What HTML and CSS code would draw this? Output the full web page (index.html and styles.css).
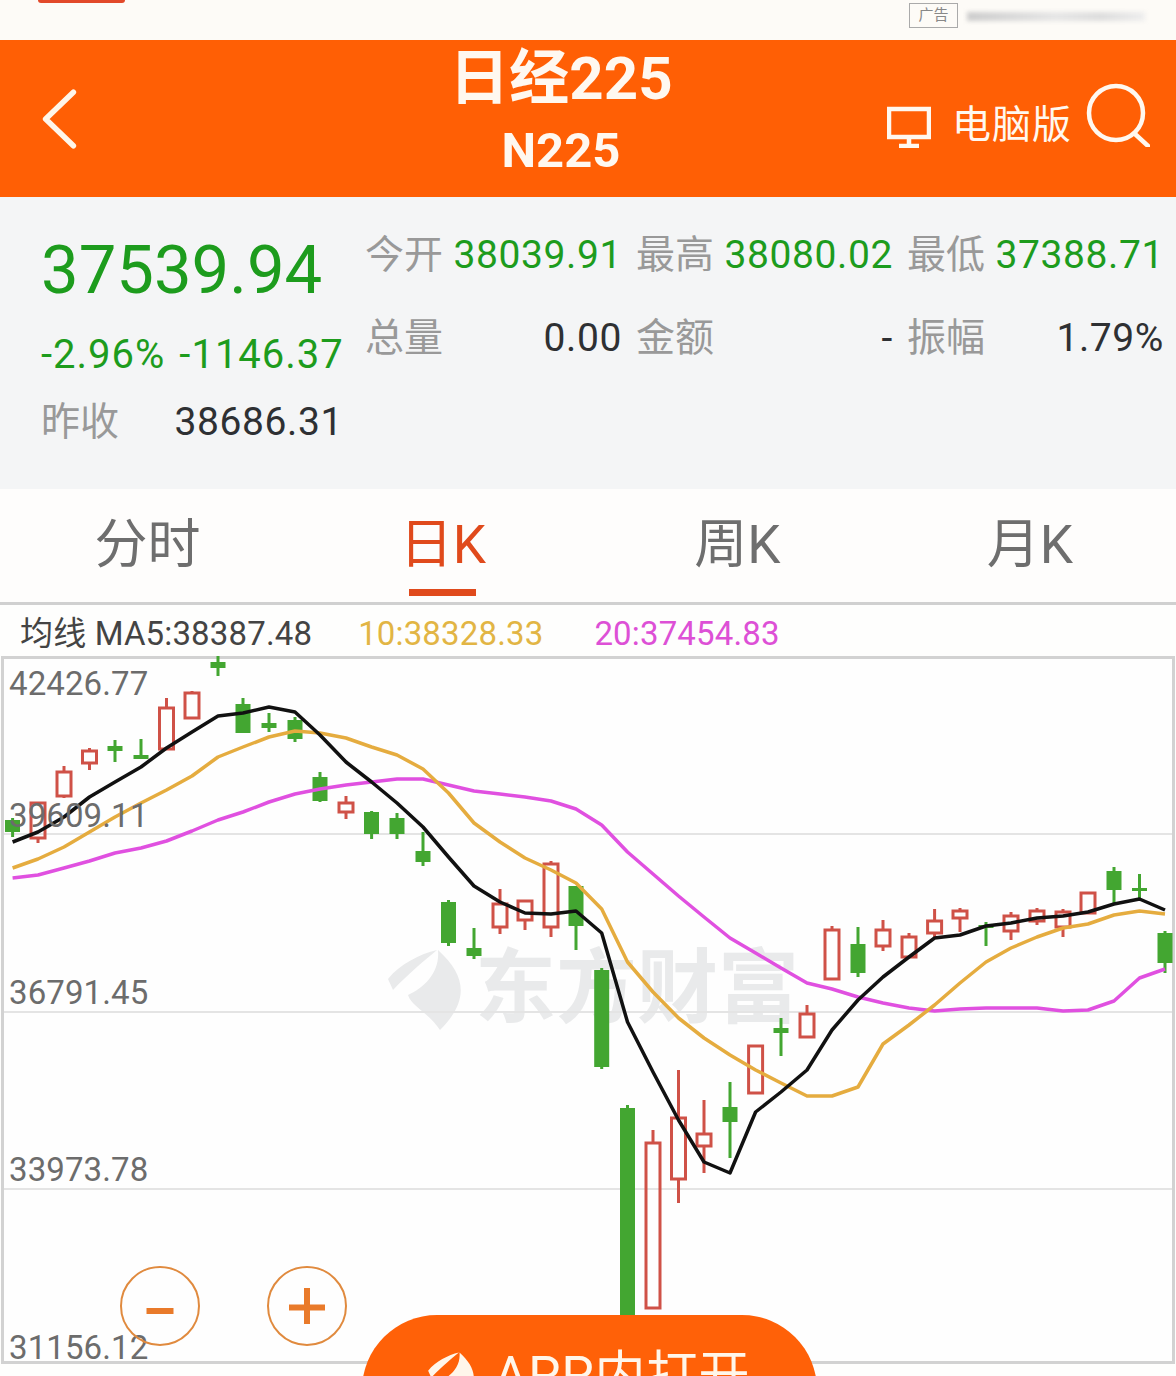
FILE: index.html
```html
<!DOCTYPE html>
<html lang="zh-CN">
<head>
  <meta charset="UTF-8" />
  <title>日经225 N225</title>
  <link rel="stylesheet" href="styles.css">
</head>
<body>
  <div class="ad-bar">
    <span class="ad-pill"></span>
    <span class="ad-tag">广告</span>
    <span class="ad-blur"></span>
  </div>

  <header class="top">
    <div class="top-left">
      <svg class="back" viewBox="0 0 40 64"><path d="M35 3 L5 32 L35 61"/></svg>
    </div>
    <div class="top-title">
      <div class="name">日经225</div>
      <div class="code">N225</div>
    </div>
    <div class="top-right">
      <svg class="monitor" viewBox="0 0 44 42"><path d="M2 3H42V31H2Z"/><path d="M22 31V40M12 40H32"/></svg>
      <span class="pc">电脑版</span>
      <svg class="search" viewBox="0 0 64 64"><circle cx="30" cy="30" r="27"/><path d="M49 51L62 63"/></svg>
    </div>
  </header>

  <section class="quote">
    <div class="quote-main">
      <div class="price">37539.94</div>
      <div class="change"><span>-2.96%</span><span>-1146.37</span></div>
      <div class="prev"><span class="label">昨收</span><span class="dark">38686.31</span></div>
    </div>
    <div class="quote-grid">
      <div class="cell"><span class="label">今开</span><span class="green">38039.91</span></div>
      <div class="cell"><span class="label">最高</span><span class="green">38080.02</span></div>
      <div class="cell"><span class="label">最低</span><span class="green">37388.71</span></div>
      <div class="cell"><span class="label">总量</span><span class="dark">0.00</span></div>
      <div class="cell"><span class="label">金额</span><span class="dark">-</span></div>
      <div class="cell"><span class="label">振幅</span><span class="dark">1.79%</span></div>
    </div>
  </section>

  <nav class="tabs">
    <div class="tab">分时</div>
    <div class="tab active">日K</div>
    <div class="tab">周K</div>
    <div class="tab">月K</div>
  </nav>

  <div class="ma-row">
    <span class="ma5">均线 MA5:38387.48</span>
    <span class="ma10">10:38328.33</span>
    <span class="ma20">20:37454.83</span>
  </div>

  <div class="chart">
    <div class="watermark">
      <svg class="wm-logo" viewBox="388 944 76 86">
        <path d="M388 977C400 962 420 952 437 948C425 958 408 972 393 988Z"/>
        <path d="M438 948C468 975 468 1000 440 1028C428 1010 412 1005 408 993C425 985 440 970 438 948Z"/>
      </svg>
      <span>东方财富</span>
    </div>

    <svg class="plot" viewBox="0 656 1176 719">
      <g class="grid">
        <path d="M4 834H1172M4 1012H1172M4 1189H1172"/>
      </g>
      <g class="candle down">
        <path d="M12.6 818V837"/><rect x="5" y="820" width="15" height="12"/>
        <path d="M115 740V762"/><rect x="107.500" y="746" width="15" height="5"/>
        <path d="M141 739V759"/><rect x="133.500" y="755" width="15" height="4"/>
        <path d="M218 656V676"/><rect x="210.500" y="662" width="15" height="6"/>
        <path d="M243 698V733"/><rect x="235.500" y="704" width="15" height="29"/>
        <path d="M269 713V732"/><rect x="261.500" y="723" width="15" height="5"/>
        <path d="M295 717V742"/><rect x="287.500" y="720" width="15" height="19"/>
        <path d="M320 772V802"/><rect x="312.500" y="777" width="15" height="24"/>
        <path d="M371.600 811V839"/><rect x="364" y="812" width="15" height="22"/>
        <path d="M397 813V839"/><rect x="389.500" y="818" width="15" height="16"/>
        <path d="M423 832V866"/><rect x="415.500" y="851" width="15" height="11"/>
        <path d="M448.500 900V946"/><rect x="441" y="902" width="15" height="41"/>
        <path d="M474 928V959"/><rect x="466.500" y="948" width="15" height="8"/>
        <path d="M576 886V950"/><rect x="568.500" y="886" width="15" height="40"/>
        <path d="M601.700 968V1069"/><rect x="594.200" y="970" width="15" height="97"/>
        <path d="M627.500 1105V1320"/><rect x="620" y="1108" width="15" height="212"/>
        <path d="M730 1082V1158"/><rect x="722.500" y="1107" width="15" height="15"/>
        <path d="M781 1018V1056"/><rect x="773.500" y="1028" width="15" height="5"/>
        <path d="M858 927V977"/><rect x="850.500" y="944" width="15" height="29"/>
        <path d="M986 922V946"/><rect x="978.500" y="925" width="15" height="3"/>
        <path d="M1114 867V905"/><rect x="1106.500" y="871" width="15" height="19"/>
        <path d="M1139.500 874V898"/><rect x="1132" y="888" width="15" height="3"/>
        <path d="M1165 931V973"/><rect x="1157.500" y="933" width="15" height="30"/>
      </g>
      <g class="candle up">
        <path d="M38 838V843"/><rect x="31" y="803" width="14" height="35"/>
        <path d="M64 766V772M64 796V798"/><rect x="57" y="772" width="14" height="24"/>
        <path d="M89.500 748V751M89.500 763V770"/><rect x="82.500" y="751" width="14" height="12"/>
        <path d="M166.500 698V708"/><rect x="159.500" y="708" width="14" height="41"/>
        <path d="M192 691V693"/><rect x="185" y="693" width="14" height="25"/>
        <path d="M346 796V803M346 812V819"/><rect x="339" y="803" width="14" height="9"/>
        <path d="M500 889V904M500 927V934"/><rect x="493" y="904" width="14" height="23"/>
        <path d="M525 920V930"/><rect x="518" y="901" width="14" height="19"/>
        <path d="M551 861V864M551 927V937"/><rect x="544" y="864" width="14" height="63"/>
        <path d="M653 1130V1143"/><rect x="646" y="1143" width="14" height="165"/>
        <path d="M678.500 1070V1118M678.500 1179V1203"/><rect x="671.500" y="1118" width="14" height="61"/>
        <path d="M704 1100V1134M704 1146V1173"/><rect x="697" y="1134" width="14" height="12"/>
        <rect x="748.600" y="1046" width="14" height="47"/>
        <path d="M807 1005V1014"/><rect x="800" y="1014" width="14" height="23"/>
        <path d="M832 926V930"/><rect x="825" y="930" width="14" height="49"/>
        <path d="M883 920V930M883 946V951"/><rect x="876" y="930" width="14" height="16"/>
        <path d="M909 933V937"/><rect x="902" y="937" width="14" height="20"/>
        <path d="M934.600 909V921M934.600 933V937"/><rect x="927.600" y="921" width="14" height="12"/>
        <path d="M960 908V911M960 918V932"/><rect x="953" y="911" width="14" height="7"/>
        <path d="M1011 912V916M1011 931V940"/><rect x="1004" y="916" width="14" height="15"/>
        <path d="M1037 908V911M1037 921V925"/><rect x="1030" y="911" width="14" height="10"/>
        <path d="M1063 909V912M1063 927V937"/><rect x="1056" y="912" width="14" height="15"/>
        <rect x="1081" y="893" width="14" height="20"/>
      </g>
      <polyline class="line m20" points="12.600,878 38,875 64,868 89.500,861 115,853 141,848 166.500,841 192,831 218,820 243,812 269,802 295,794 320,789 346,785 371.600,782 397,779 423,779 448.500,785 474,791 500,794 525,797 551,801 576,809 601.700,825 627.500,852 653,874 678.500,896 704,917 730,938 755.600,953 781,968 807,983 832,989 858,997 883,1003 909,1008 934.600,1011 960,1009 986,1008 1011,1008 1037,1008 1063,1011 1088,1010 1114,1001 1139.500,978 1165,969"/>
      <polyline class="line m10" points="12.600,868 38,859 64,847 89.500,832 115,817 141,803 166.500,790 192,776 218,757 243,747 269,737 295,731 320,733 346,738 371.600,747 397,755 423,769 448.500,793 474,823 500,842 525,858 551,870 576,883 601.700,909 627.500,962 653,992 678.500,1018 704,1038 730,1055 755.600,1070 781,1083 807,1096 832,1096 858,1087 883,1044 909,1025 934.600,1005 960,983 986,962 1011,948 1037,937 1063,928 1088,924 1114,915 1139.500,911 1165,914"/>
      <polyline class="line m5" points="12.600,842 38,832 64,817 89.500,797 115,782 141,767 166.500,748 192,732 218,716 243,713 269,707 295,712 320,735 346,762 371.600,782 397,803 423,827 448.500,857 474,886 500,902 525,913 551,914 576,911 601.700,933 627.500,1022 653,1072 678.500,1120 704,1162 730,1173 755.600,1112 781,1092 807,1070 832,1030 858,1000 883,977 909,957 934.600,938 960,935 986,926 1011,923 1037,918 1063,916 1088,912 1114,904 1139.500,899 1165,910"/>
    </svg>

    <div class="axis">
      <span>42426.77</span>
      <span>39609.11</span>
      <span>36791.45</span>
      <span>33973.78</span>
      <span>31156.12</span>
    </div>

    <div class="zoom-btns">
      <div class="zoom-btn"><svg viewBox="0 0 36 36"><path d="M4.500 23H31.500"/></svg></div>
      <div class="zoom-btn"><svg viewBox="0 0 36 36"><path d="M18 0V36"/><path d="M0 19.500H36"/></svg></div>
    </div>
  </div>

  <div class="open-app">
    <svg class="app-logo" viewBox="388 944 76 86">
      <path d="M388 977C400 962 420 952 437 948C425 958 408 972 393 988Z"/>
      <path d="M438 948C468 975 468 1000 440 1028C428 1010 412 1005 408 993C425 985 440 970 438 948Z"/>
    </svg>
    <span>APP内打开</span>
  </div>
</body>
</html>
```

FILE: styles.css
```css
* {
  box-sizing: border-box;
}
html, body {
  margin: 0;
  height: 1376px;
  overflow: hidden;
}
body {
  position: relative;
  background: #fefefd;
  font-family: Roboto, "Noto Sans CJK SC", sans-serif;
}

/* ad strip */
.ad-bar {
  height: 40px;
  display: flex;
  background: #fdfbf7;
}
.ad-pill {
  width: 87px;
  height: 3px;
  margin-left: 38px;
  background: #e2492a;
  border-radius: 0 0 8px 8px;
}
.ad-tag {
  width: 49px;
  height: 25px;
  margin: 3px 0 0 auto;
  border: 1px solid #aaa;
  color: #888;
  font-size: 15px;
  line-height: 23px;
  text-align: center;
}
.ad-blur {
  width: 178px;
  height: 9px;
  margin: 12px 31px 0 9px;
  background: linear-gradient(90deg, #ccc, #e6e6e6 50%, #ddd 75%, #eee);
  filter: blur(2px);
}

/* orange header */
.top {
  height: 157px;
  display: grid;
  grid-template-columns: 320px 482px 1fr;
  background: #ff5f05;
  color: #fff8f0;
}
.top-left {
  padding: 48px 0 0 41px;
}
.back {
  width: 37px;
  height: 62px;
  fill: none;
  stroke: #fff6ea;
  stroke-width: 6;
  stroke-linecap: round;
  stroke-linejoin: round;
}
.top-title {
  padding-top: 2px;
  text-align: center;
  font-weight: 700;
}
.name {
  font-size: 60px;
  line-height: 74px;
}
.code {
  font-size: 49px;
  line-height: 72px;
  margin-top: -1px;
}
.top-right {
  display: flex;
  align-items: flex-start;
  padding-left: 85px;
}
.monitor {
  width: 44px;
  height: 42px;
  margin-top: 66px;
  fill: none;
  stroke: #fff8f0;
  stroke-width: 4.5;
}
.pc {
  margin: 57px 0 0 21px;
  font-size: 39px;
  line-height: 56px;
  letter-spacing: 1px;
}
.search {
  width: 64px;
  height: 64px;
  margin: 43px 0 0 14px;
  fill: none;
  stroke: #fff8f0;
  stroke-width: 4.5;
  stroke-linecap: round;
}

/* quote block */
.quote {
  height: 292px;
  display: flex;
  background: #f4f5f6;
  color: #1d9c1d;
}
.quote-main {
  width: 365px;
  padding: 29px 0 0 41px;
}
.price {
  font-size: 67px;
  line-height: 88px;
}
.change {
  display: flex;
  gap: 14px;
  font-size: 40px;
  line-height: 54px;
  letter-spacing: 1px;
  margin-top: 14px;
}
.prev {
  display: flex;
  width: 300px;
  justify-content: space-between;
  font-size: 39px;
  line-height: 54px;
  margin-top: 13px;
}
.prev .dark {
  margin-right: -2px;
}
.quote-grid {
  width: 799px;
  display: grid;
  grid-template-columns: repeat(3, 257px);
  column-gap: 14px;
  grid-auto-rows: 83px;
  padding-top: 30px;
  font-size: 39px;
  line-height: 56px;
}
.cell {
  display: flex;
  justify-content: space-between;
}
.label {
  color: #999;
}
.green {
  color: #1d9c1d;
  letter-spacing: .6px;
}
.dark {
  color: #2e3033;
  letter-spacing: .6px;
}

/* tabs */
.tabs {
  height: 116px;
  display: grid;
  grid-template-columns: 295px 296px 293px 292px;
  border-bottom: 3px solid #d0d0d0;
  background: #fefdfc;
}
.tab {
  position: relative;
  padding-top: 20px;
  text-align: center;
  font-size: 53px;
  line-height: 72px;
  color: #6e6e6e;
}
.tab.active {
  color: #e04a1c;
}
.tab.active::after {
  content: "";
  position: absolute;
  left: 114px;
  bottom: 6px;
  width: 67px;
  height: 7px;
  background: #e04a1c;
}

/* moving average legend */
.ma-row {
  height: 51px;
  display: flex;
  padding-left: 20px;
  font-size: 33px;
  line-height: 57px;
  letter-spacing: .15px;
}
.ma5 {
  color: #444;
}
.ma10 {
  margin-left: 46px;
  color: #e2b544;
}
.ma20 {
  margin-left: 51px;
  color: #dd50d6;
}

/* chart */
.chart {
  position: relative;
  height: 708px;
  margin: 0 1px;
  border: 3px solid #d2d2d2;
  background: #fefefe;
}
.plot {
  position: absolute;
  left: -4px;
  top: -3px;
  width: 1176px;
  height: 719px;
  overflow: visible;
}
.grid path {
  fill: none;
  stroke: #e4e4e4;
  stroke-width: 2;
}
.candle path {
  fill: none;
  stroke-width: 3;
}
.candle.down path {
  stroke: #43a631;
}
.candle.down rect {
  fill: #43a631;
}
.candle.up path,
.candle.up rect {
  fill: none;
  stroke: #cf5147;
  stroke-width: 3;
}
.line {
  fill: none;
  stroke-width: 3.5;
  stroke-linejoin: round;
}
.m5 {
  stroke: #111;
}
.m10 {
  stroke: #e5ac3f;
}
.m20 {
  stroke: #e050e0;
}

/* price labels sit just above their grid lines, so the first gap is shorter */
.axis {
  position: absolute;
  left: 5px;
  top: 5px;
  display: grid;
  grid-template-rows: 132px 177px 177px 178px 40px;
  font-size: 33px;
  line-height: 40px;
  letter-spacing: .1px;
  color: #6c6c6c;
}

.watermark {
  position: absolute;
  left: 384px;
  top: 285px;
  display: flex;
  align-items: center;
  gap: 11px;
  color: #e9eaeb;
  font-size: 81px;
  font-weight: 700;
  line-height: 90px;
}
.wm-logo {
  width: 76px;
  height: 86px;
  fill: #e9eaeb;
}

.zoom-btns {
  position: absolute;
  left: 116px;
  top: 607px;
  display: flex;
  gap: 67px;
}
.zoom-btn {
  width: 80px;
  height: 80px;
  display: flex;
  align-items: center;
  justify-content: center;
  border: 2.5px solid #e08a3e;
  border-radius: 50%;
}
.zoom-btn svg {
  width: 36px;
  height: 36px;
  fill: none;
  stroke: #e97a2a;
  stroke-width: 6;
}

/* floating button, runs off the bottom of the page */
.open-app {
  position: absolute;
  left: 362px;
  top: 1315px;
  width: 455px;
  height: 150px;
  display: flex;
  align-items: flex-start;
  gap: 18px;
  padding: 25px 0 0 66px;
  background: #ff6108;
  border-radius: 75px;
  color: #fff6ea;
  font-size: 51px;
  line-height: 72px;
  letter-spacing: 1px;
}
.app-logo {
  width: 48px;
  height: 54px;
  margin-top: 10px;
  fill: #fff6ea;
}
```
